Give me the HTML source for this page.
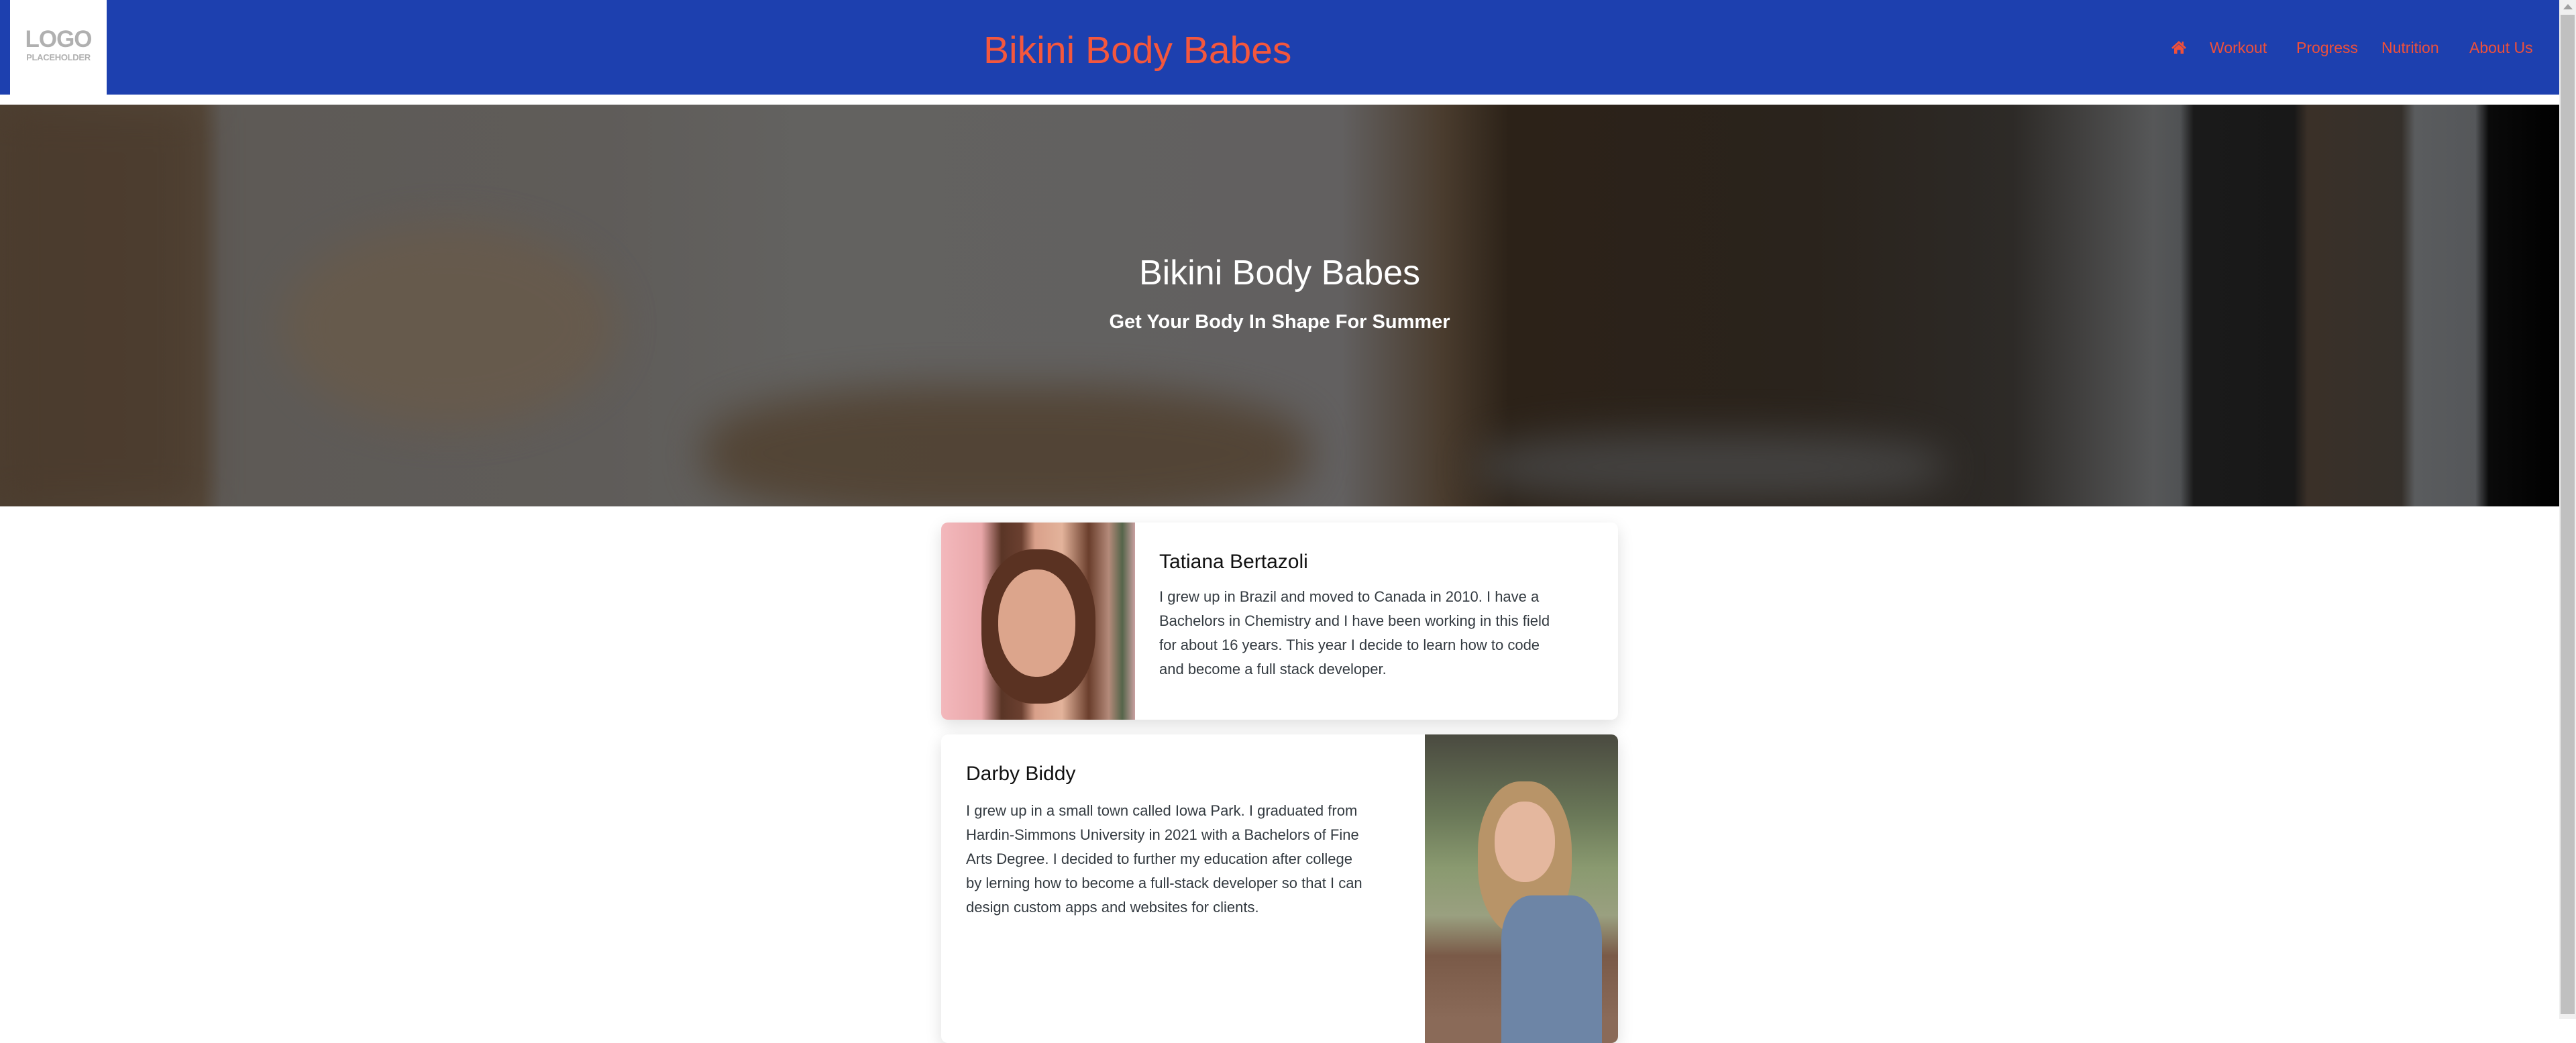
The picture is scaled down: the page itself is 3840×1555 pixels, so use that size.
<!DOCTYPE html>
<html><head><meta charset="utf-8"><style>
*{margin:0;padding:0;box-sizing:border-box}
html,body{width:3840px;height:1519px;overflow:hidden;background:#fff;font-family:"Segoe UI","Liberation Sans",sans-serif}
.nav{position:absolute;left:0;top:0;width:3815px;height:141px;background:#1d40af}
.logo{position:absolute;left:15px;top:0;width:144px;height:141px;background:#fff;text-align:center;color:#b0b0b0;font-weight:bold}
.logo .l1{position:absolute;top:44px;left:0;width:100%;font-size:35px;letter-spacing:-1px;line-height:30px}
.logo .l2{position:absolute;top:80px;left:0;width:100%;font-size:13px;line-height:12px;letter-spacing:-0.3px}
.title{position:absolute;left:1466px;top:40px;font-size:57px;color:#f4573d;line-height:70px;white-space:nowrap}
.links{position:absolute;top:56px;left:0;font-size:23px;color:#f0503a;line-height:30px;white-space:nowrap}
.links span{position:absolute}
.hero{position:absolute;left:0;top:156px;width:3815px;height:599px;overflow:hidden;
background:linear-gradient(90deg,#4d3f31 0,#55483a 300px,#5e5a56 330px,#5f5c59 900px,#636260 1200px,#626060 2000px,#4a3c2e 2150px,#2c2218 2250px,#2a231c 2700px,#2d2a27 3000px,#565758 3210px,#505254 3250px,#1a1a1a 3270px,#181818 3420px,#3a3028 3440px,#35302b 3580px,#5a5c5e 3600px,#55575a 3690px,#0a0a0a 3710px,#000 3815px)}
.blob{position:absolute;filter:blur(30px)}
.h1{position:absolute;left:0;width:3815px;top:219px;text-align:center;color:#fff;font-size:52px;line-height:64px;font-weight:500}
.h2{position:absolute;left:0;width:3815px;top:304px;text-align:center;color:#fff;font-size:29px;line-height:40px;font-weight:bold}
.card{position:absolute;left:1403px;width:1009px;background:#fff;border-radius:10px;box-shadow:0 8px 24px rgba(0,0,0,0.13);overflow:hidden}
.name{position:absolute;font-size:30px;color:#111;font-weight:500;white-space:nowrap}
.txt{position:absolute;font-size:22px;line-height:36px;color:#333a40;white-space:nowrap}
.sb{position:absolute;left:3815px;top:0;width:25px;height:1519px;background:#f0f0f0}
.sb .th{position:absolute;left:2px;top:22px;width:21px;height:1490px;background:#c0c0c0}
.sb .ar{position:absolute;left:6px;top:6px;border-left:7px solid transparent;border-right:7px solid transparent;border-bottom:8px solid #a0a0a0}
</style></head><body>
<div class="nav">
 <div class="logo"><div class="l1">LOGO</div><div class="l2">PLACEHOLDER</div></div>
 <div class="title">Bikini Body Babes</div>
 <div class="links">
  <span style="left:3236px;top:2px"><svg width="24" height="24" viewBox="0 0 24 24"><path d="M12 3 L1 13 L3 15 L12 7 L21 15 L23 13 L19 9.5 V4 H16.5 V7.3 Z" fill="#f0503a"/><path d="M5 14 L12 8 L19 14 V22 H14.5 V16.5 H9.5 V22 H5 Z" fill="#f0503a"/></svg></span>
  <span style="left:3294px">Workout</span>
  <span style="left:3423px">Progress</span>
  <span style="left:3550px">Nutrition</span>
  <span style="left:3681px">About Us</span>
 </div>
</div>
<div class="hero">
 <div class="blob" style="left:420px;top:180px;width:500px;height:300px;background:#6a5a48;border-radius:50%;opacity:.7"></div>
 <div class="blob" style="left:1050px;top:420px;width:900px;height:200px;background:#4f3e2c;border-radius:40%;opacity:.8"></div>
 <div class="blob" style="left:2200px;top:490px;width:700px;height:100px;background:#4a4a4a;border-radius:40%;opacity:.8"></div>
 <div class="blob" style="left:0;top:0;width:300px;height:600px;background:#4a3a2c;opacity:.7"></div>
 <div class="h1">Bikini Body Babes</div>
 <div class="h2">Get Your Body In Shape For Summer</div>
</div>
<div class="card" style="top:779px;height:294px">
 <div style="position:absolute;left:0;top:0;width:289px;height:294px;background:linear-gradient(90deg,#f3b8bc 0,#e9a7a9 60px,#5a3526 90px,#6b4030 120px,#d9a08a 140px,#e3b39b 180px,#6a3e2c 220px,#b48a7a 250px,#55654a 270px,#c9a0a0 289px)"></div>
 <div style="position:absolute;left:60px;top:40px;width:170px;height:230px;border-radius:45%;background:#5a3222"></div>
 <div style="position:absolute;left:85px;top:70px;width:115px;height:160px;border-radius:48%;background:#dca58c"></div>
 <div class="name" style="left:325px;top:42px">Tatiana Bertazoli</div>
 <div class="txt" style="left:325px;top:93px">I grew up in Brazil and moved to Canada in 2010. I have a<br>Bachelors in Chemistry and I have been working in this field<br>for about 16 years. This year I decide to learn how to code<br>and become a full stack developer.</div>
</div>
<div class="card" style="top:1095px;height:460px">
 <div style="position:absolute;left:721px;top:0;width:288px;height:460px;background:linear-gradient(180deg,#4a4a40 0,#6a7858 120px,#8a9a70 200px,#9aa080 270px,#7a5a48 330px,#8a6a58 424px)"></div>
 <div style="position:absolute;left:800px;top:70px;width:140px;height:230px;border-radius:45%;background:#b89468"></div>
 <div style="position:absolute;left:825px;top:100px;width:90px;height:120px;border-radius:48%;background:#e4b79e"></div>
 <div style="position:absolute;left:835px;top:240px;width:150px;height:220px;border-radius:30% 30% 0 0;background:#6d85a6"></div>
 <div class="name" style="left:37px;top:42px">Darby Biddy</div>
 <div class="txt" style="left:37px;top:96px">I grew up in a small town called Iowa Park. I graduated from<br>Hardin-Simmons University in 2021 with a Bachelors of Fine<br>Arts Degree. I decided to further my education after college<br>by lerning how to become a full-stack developer so that I can<br>design custom apps and websites for clients.</div>
</div>
<div class="sb"><div class="ar"></div><div class="th"></div></div>
</body></html>
